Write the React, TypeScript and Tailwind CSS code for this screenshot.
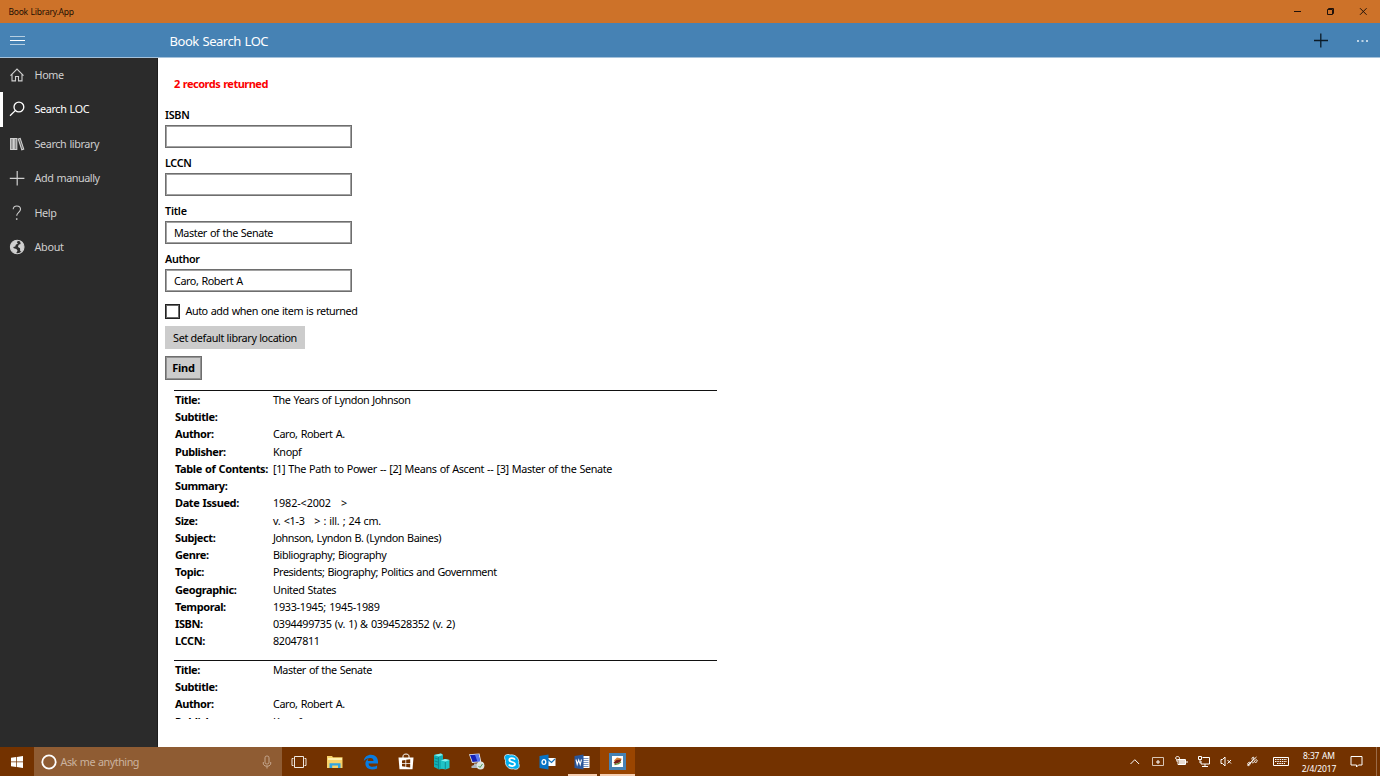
import type { ReactNode } from "react";

type Row = { label: string; value?: string; track?: string };

const first: Row[] = [
  { label: "Title:", value: "The Years of Lyndon Johnson", track: "tracking-[-0.44px]" },
  { label: "Subtitle:" },
  { label: "Author:", value: "Caro, Robert A.", track: "tracking-[-0.4px]" },
  { label: "Publisher:", value: "Knopf", track: "tracking-[-0.36px]" },
  {
    label: "Table of Contents:",
    value: "[1] The Path to Power -- [2] Means of Ascent -- [3] Master of the Senate",
    track: "tracking-[-0.37px]",
  },
  { label: "Summary:" },
  { label: "Date Issued:", value: "1982-<2002   >", track: "tracking-[-0.12px]" },
  { label: "Size:", value: "v. <1-3   > : ill. ; 24 cm.", track: "tracking-[-0.27px]" },
  { label: "Subject:", value: "Johnson, Lyndon B. (Lyndon Baines)", track: "tracking-[-0.46px]" },
  { label: "Genre:", value: "Bibliography; Biography", track: "tracking-[-0.41px]" },
  { label: "Topic:", value: "Presidents; Biography; Politics and Government", track: "tracking-[-0.44px]" },
  { label: "Geographic:", value: "United States", track: "tracking-[-0.42px]" },
  { label: "Temporal:", value: "1933-1945; 1945-1989", track: "tracking-[-0.28px]" },
  { label: "ISBN:", value: "0394499735 (v. 1) & 0394528352 (v. 2)", track: "tracking-[-0.32px]" },
  { label: "LCCN:", value: "82047811", track: "tracking-[-0.34px]" },
];

const second: Row[] = [
  { label: "Title:", value: "Master of the Senate", track: "tracking-[-0.44px]" },
  { label: "Subtitle:" },
  { label: "Author:", value: "Caro, Robert A.", track: "tracking-[-0.4px]" },
  { label: "Publisher:", value: "Knopf", track: "tracking-[-0.36px]" },
];

function Record({ rows }: { rows: Row[] }) {
  return (
    <div className="h-[270px] w-[543px] shrink-0 border-t border-[#111] pt-[0.3px]">
      {rows.map((r) => (
        <div key={r.label} className="flex h-[17.25px] items-center whitespace-pre pl-[1px] leading-[17px]">
          <span className="w-[98px] shrink-0 text-[11px] font-bold tracking-[-0.4px]">{r.label}</span>
          <span className={r.track}>{r.value}</span>
        </div>
      ))}
    </div>
  );
}

function Field({ label, value, track }: { label: string; value?: string; track: string }) {
  return (
    <div className="flex h-[48.15px] flex-col">
      <label className={`h-[17px] font-semibold leading-[14px] ${track}`}>{label}</label>
      <div className="flex h-[23px] w-[187px] items-center border border-[#6e6e6e] pl-[8px] tracking-[-0.43px] inset-ring inset-ring-[#a2a2a2]">
        {value}
      </div>
    </div>
  );
}

function NavItem({ label, icon, active, track }: { label: string; icon: ReactNode; active?: boolean; track: string }) {
  return (
    <div className={`flex h-[34.5px] items-center ${active ? "border-l-[3px] border-white pl-[6px] text-white" : "pl-[9px] text-[#cfcfcf]"}`}>
      <svg width="16" height="16" viewBox="0 0 16 16" fill="none" stroke="currentColor" strokeWidth="1.1" className="shrink-0">
        {icon}
      </svg>
      <span className={`ml-[9.5px] whitespace-nowrap ${track}`}>{label}</span>
    </div>
  );
}

function TaskButton({ children, className = "w-[35.2px]" }: { children: ReactNode; className?: string }) {
  return <div className={`flex h-[29px] shrink-0 items-center justify-center ${className}`}>{children}</div>;
}

export default function App() {
  return (
    <div className="flex h-[776px] w-[1380px] flex-col overflow-hidden bg-white font-['Noto_Sans','Open_Sans',sans-serif] text-[10.8px] text-black [word-spacing:0.7px]">
      <header className="flex h-[23px] shrink-0 items-center bg-[#cd7229] pl-[8.5px]">
        <span className="pt-[1px] text-[8.5px] tracking-[-0.23px] text-[#1c0f04]">Book Library.App</span>
        <svg className="ml-auto" width="90" height="23" viewBox="1290 0 90 23" fill="none" stroke="#21120a" strokeWidth="1">
          <path d="M1294 11.5h7" />
          <path d="M1327.5 9.5h5v5h-5zM1328.5 9.5v-1h5v5h-1" />
          <path d="M1360 8.2l6.6 6.6M1366.6 8.2l-6.6 6.6" />
        </svg>
      </header>

      <div className="flex h-[35px] shrink-0 items-center border-b border-[#a5c2db] bg-[#4682b4]">
        <svg className="ml-[9px]" width="16" height="12" viewBox="0 0 16 12" strokeWidth="1">
          <path d="M1 2.5h15M1 10.5h15" stroke="#b5cee1" />
          <path d="M1 6.5h15" stroke="#ffffff" />
        </svg>
        <h1 className="ml-[144.5px] pt-[3px] text-[13px] tracking-[-0.45px] text-white">Book Search LOC</h1>
        <svg className="ml-auto" width="70" height="34" viewBox="1310 23 70 34">
          <path d="M1314 40.5h14M1320.8 33.5v14" stroke="#0b1a26" strokeWidth="1.3" />
          <path d="M1357 41h2M1361.5 41h2M1366 41h2" stroke="#e6eff6" strokeWidth="1.4" />
        </svg>
      </div>

      <div className="flex min-h-0 flex-1">
        <nav className="-mt-[0.4px] w-[158px] shrink-0 border-r border-[#1d1d1d] bg-[#2b2b2b]">
          <NavItem label="Home" track="tracking-[-0.35px]" icon={<path d="M1.5 8.6L8 2l6.5 6.6M3 7.5v6.4h3.5V9.5h3v4.4H13V7.5" />} />
          <NavItem label="Search LOC" active track="tracking-[-0.37px]" icon={<><circle cx="9.9" cy="6" r="4.9" strokeWidth="1.3" /><path d="M6.5 9.4L1 14.8" strokeWidth="1.3" /></>} />
          <NavItem
            label="Search library"
            track="tracking-[-0.39px]"
            icon={<><path d="M1.6 2.5h2.6v11H1.6zM5.2 2.5h2.6v11H5.2z" fill="#8c8c8c" /><path d="M9.3 3l1.9-.6 3.5 10.7-1.9.6z" fill="#666" /></>}
          />
          <NavItem label="Add manually" track="tracking-[-0.43px]" icon={<path d="M.8 8.3h14.6M8.2 1v14.6" strokeWidth="1.2" />} />
          <NavItem label="Help" track="tracking-[-0.4px]" icon={<><path d="M4.2 4.3C4.3 2.2 5.8 1 7.8 1c2.2 0 3.7 1.3 3.7 3.3 0 3-3.8 3.2-3.8 6.5" /><path d="M7.7 13.3v1.5" strokeWidth="1.5" /></>} />
          <NavItem
            label="About"
            track="tracking-[-0.3px]"
            icon={
              <>
                <circle cx="8.2" cy="8" r="6.8" />
                <path d="M1.6 6.3C3 2.800 5.600 1.100 9.500 1.300L7.800 3.200 9 4.400 6.800 5.800 6.300 7.400 4.200 8.100l.6 1.200 2.600.6 1.200 1.800-1.600 2.900C3.600 13.800 1.300 10.800 1.600 6.300zM11 1.800c2.600 1.200 4 3.600 4 6.500-.2 2.200-1.200 3.600-2.400 4.600l-1.400-.8-.2-2.800-2-1.200.6-2.300 2-.7z" fill="currentColor" stroke="none" />
              </>
            }
          />
        </nav>

        <main className="flex min-w-0 flex-1 flex-col pl-[7px]">
          <p className="mt-[16px] h-[20px] pl-[9px] text-[11px] font-bold leading-[19px] tracking-[-0.52px] text-[#fb0000]">2 records returned</p>
          <form className="mt-[14px] flex flex-col">
            <Field label="ISBN" track="tracking-[-0.3px]" />
            <Field label="LCCN" track="tracking-[-0.35px]" />
            <Field label="Title" value="Master of the Senate" track="tracking-[-0.25px]" />
            <Field label="Author" value="Caro, Robert A" track="tracking-[-0.35px]" />
            <div className="mt-[3px] flex h-[16px] items-center">
              <span className="size-[15px] border border-[#222] inset-ring inset-ring-[#6a6a6a]" />
              <span className="ml-[5.5px] tracking-[-0.45px]">Auto add when one item is returned</span>
            </div>
            <button type="button" className="mt-[6px] h-[23px] w-[140px] whitespace-nowrap bg-[#ccc] pt-[2px] tracking-[-0.33px]">
              Set default library location
            </button>
            <button type="button" className="mt-[7px] h-[24px] w-[37px] border border-[#6e6e6e] bg-[#ccc] pt-[1px] text-[11px] font-bold tracking-[-0.2px] inset-ring inset-ring-[#929292]">
              Find
            </button>
          </form>
          <section className="ml-[9px] mt-[10px] flex h-[329px] flex-col overflow-hidden">
            <Record rows={first} />
            <Record rows={second} />
          </section>
        </main>
      </div>

      <footer className="flex h-[29px] shrink-0 items-center bg-[#733200] text-white">
        <div className="flex w-[34px] justify-center">
          <svg width="12" height="12" viewBox="0 0 12 12" fill="white">
            <path d="M0 1.7l5.2-.7v4.6H0zM5.9.9L12 0v5.6H5.9zM0 6.3h5.2V11L0 10.3zM5.9 6.3H12V12l-6.1-.9z" />
          </svg>
        </div>
        <div className="flex h-[29px] w-[248px] items-center bg-[#8f5c33] pl-[7px]">
          <svg width="16" height="16" viewBox="0 0 16 16"><circle cx="8" cy="8" r="6.7" fill="none" stroke="white" strokeWidth="1.8" /></svg>
          <span className="ml-[3.5px] pt-[1px] tracking-[-0.5px] text-[#cbb39f]">Ask me anything</span>
          <svg className="ml-auto mr-[9px]" width="12" height="14" viewBox="0 0 12 14" fill="none" stroke="#c5a78e" strokeWidth="1">
            <rect x="4" y="1" width="4" height="8" rx="1.8" /><path d="M2.3 7v2.2L4 11h4l1.7-1.8V7M6 11v2.5" />
          </svg>
        </div>
        <TaskButton className="w-[34.5px]">
          <svg width="16" height="14" viewBox="0 0 16 14" fill="none" stroke="#f0e8e0">
            <path d="M3.5 1.5h9v11h-9zM2.5 3.5H1v7h1.5M13.5 3.5H15v7h-1.5" />
          </svg>
        </TaskButton>
        <TaskButton className="ml-[1.4px] w-[35.2px]">
          <svg width="16" height="14" viewBox="0 0 16 14">
            <path d="M0 1h5l1 1.3h9.5V13H0z" fill="#f7d269" /><path d="M1 3h14v2H1z" fill="#fff0ae" />
            <path d="M2.5 8.2h11V13H11v-2.4H5.2V13H2.5z" fill="#31a5e1" />
          </svg>
        </TaskButton>
        <TaskButton className="w-[35.5px]">
          <svg width="16" height="16" viewBox="0 0 16 16">
            <path d="M.8 7.1C1.3 3 4.3.8 8 .8c4.4 0 7 3 7 7v1.6H5.5c.2 2.6 2.4 3.4 4.3 3.4 1.7 0 3-.4 4.3-1.2v2.9c-1.4.7-3 1-4.9 1-4 0-6.8-2.2-6.8-5.7 0-2.2 1.2-4.2 3.3-5.2-.7.8-.9 1.6-1 2.4h5.8c0-2-1-3.1-3.1-3.1C4.8 3.9 2.3 5 .8 7.1z" fill="#087ce0" />
          </svg>
        </TaskButton>
        <TaskButton className="w-[34.6px]">
          <svg width="16" height="17" viewBox="0 0 16 17">
            <path d="M5 5V3c0-2.6 6-2.6 6 0v2" fill="none" stroke="white" />
            <path d="M.5 4.5h15l-1 11.7h-13z" fill="white" />
            <path d="M4 7.4l3.4-.5v3H4zM8.2 6.8l4-.6v3.7h-4zM4 10.7h3.4v3L4 13.2zM8.2 10.7h4v3.8l-4-.6z" fill="#733200" />
          </svg>
        </TaskButton>
        <TaskButton className="w-[36px]">
          <svg width="17" height="17" viewBox="0 0 17 17">
            <path d="M1 2l7-1.5L10 2v13.500L6 16.500 1 14z" fill="#12b0b4" />
            <path d="M1 2l7-1.500L10 2 5.500 3.500z" fill="#7eecec" />
            <path d="M8 7.500l4-1.500 4.500 1v8L12.500 16.500 8 15.500z" fill="#1fc4c6" /><path d="M8 7.500l4-1.500 4.500 1-4 1.500z" fill="#8af2f0" />
            <path d="M1.500 5l3.500 1M1.500 8l3.500 1M1.500 11l3.500 1M5.500 4v12M12.300 9v7" stroke="#0a8088" strokeWidth=".8" />
          </svg>
        </TaskButton>
        <TaskButton className="w-[35.5px]">
          <svg width="17" height="17" viewBox="0 0 17 17">
            <path d="M1 1.200l10.500-.8 1.800 8.600-9.300 1z" fill="#dfe6ee" />
            <path d="M2 2l8.600-.6 1.500 6.900-7.500.8z" fill="#1522b8" />
            <path d="M7 1.700l3.600-.3 1.500 6.900-2.700.3z" fill="#5a78f0" />
            <path d="M6 10.500h3v2h2v2.500H3.500v-2L6 12z" fill="#aeb6be" />
            <circle cx="12.500" cy="12.500" r="3.900" fill="#dde4df" /><path d="M10.500 13l1.500 1.500L14.500 11" fill="none" stroke="#4a9a55" />
          </svg>
        </TaskButton>
        <TaskButton className="w-[35.5px]">
          <svg width="16" height="16" viewBox="0 0 16 16">
            <path d="M1 1.500C3 0 5 .3 6 1c5-1 9.500 3 8.700 8.500 1 2 .6 4-.7 5s-3.300 1-4.500.3C4.500 15.700.7 11.500 1.500 6.500.5 4.500.3 3 1 1.500z" fill="#00aff0" stroke="#dff4fd" strokeWidth=".8" />
            <path d="M11 5.600C9.800 3.600 5.300 3.500 5.300 6c0 2.500 5.700 1.500 5.700 4.100 0 2.500-4.800 2.600-6.100.4" fill="none" stroke="white" strokeWidth="1.8" />
          </svg>
        </TaskButton>
        <TaskButton>
          <svg width="17" height="16" viewBox="0 0 17 16">
            <path d="M8 4h8.500v8H8z" fill="white" /><path d="M9 5.500l3.500 3L16 5" fill="none" stroke="#1673ba" strokeWidth="1.2" />
            <path d="M.5 2L9.500.5v15L.5 14z" fill="#0873c5" /><ellipse cx="4.9" cy="8" rx="1.9" ry="2.3" fill="none" stroke="white" strokeWidth="1.3" />
          </svg>
        </TaskButton>
        <TaskButton className="ml-[2.6px] w-[29px] border-b-2 border-[#f6ceb0]">
          <svg className="mt-[2px]" width="16" height="16" viewBox="0 0 16 16">
            <path d="M8 2h7.500v12H8z" fill="white" /><path d="M9 4.500h5.500M9 6.500h5.500M9 8.500h5.500M9 10.500h5.500M9 12.500h5.500" stroke="#5a7fb8" strokeWidth=".8" />
            <path d="M.5 2L9.500.5v15L.5 14z" fill="#2a579b" /><path d="M2 5.500l1.200 5 1.500-4.500 1.500 4.500 1.300-5" fill="none" stroke="white" strokeWidth="1.1" />
          </svg>
        </TaskButton>
        <TaskButton className="ml-[3px] w-[35px] border-b-2 border-[#f6ceb0] bg-[#9a4500]">
          <svg className="mt-[2px]" width="17" height="17" viewBox="0 0 17 17">
            <path d="M0 0h17v17H0z" fill="#4682b4" /><path d="M3 3h11v11H3z" fill="#fff" />
            <path d="M5 7.500l3-3 4.500 1-1 3-5 1z" fill="#d9822f" /><path d="M4.500 9.500l3-2.500 5-.5-2 3-4.500 1.500z" fill="#7a1f1a" /><path d="M5.500 11.700l4-1 2.500-2" stroke="#6a8f3a" strokeWidth="1.2" fill="none" />
          </svg>
        </TaskButton>
        <div className="ml-auto flex items-center">
          <svg width="165" height="29" viewBox="1126 0 165 29" fill="none" stroke="#fff" strokeWidth="1">
            <path d="M1130.5 17l4.3-4.3 4.3 4.3" />
            <path d="M1152.500 10.500h11v8h-11z" stroke="#d8c5b5" /><path d="M1158 17v-4M1156 15h4" />
            <path d="M1178 12.500h7.500v5H1178z" /><path d="M1179 15h6" strokeWidth="4" stroke="#e8dcd2" /><path d="M1187 14v2M1175.500 11c.5-2 4-2 4 .3s-3.500 2-4-.3zM1176 13.500l1.500 1" />
            <path d="M1202.500 10.500h7v6.500h-8.500v-3M1205 17v2M1202 19.500h6M1198.500 9.500h3v3h-3zM1200 13v3" />
            <path d="M1221 12.500h1.500l2.500-2.500v9l-2.500-2.500h-1.500zM1227.500 13l3.500 3.500M1231 13l-3.500 3.500" />
            <path d="M1247.500 17.500c0-2.500 3.500-3 3-1s-3.500 3-2.500 1.500l8.500-8M1252 12.500c-.5-2.500 2-3 2-1.500s-3 3-2 4.500 2-.5 3-2 3-.5 2 1-2.500 1-2.500 0" />
            <path d="M1273.500 10.500h15v8h-15z" /><path d="M1275 12.500h12M1275 14.500h12M1277 16.500h8" strokeDasharray="1.5 .8" />
          </svg>
          <div className="flex w-[56px] flex-col items-center whitespace-nowrap text-[8.5px] leading-[13px] tracking-[-0.15px]">
            <span>8:37 AM</span>
            <span>2/4/2017</span>
          </div>
          <svg width="33" height="29" viewBox="1347 0 33 29" fill="none" stroke="#fff">
            <path d="M1351 9.500h11v8.500h-3.500l-2 2v-2H1351z" /><path d="M1376.500 0v29" stroke="#9a6b48" />
          </svg>
        </div>
      </footer>
    </div>
  );
}
